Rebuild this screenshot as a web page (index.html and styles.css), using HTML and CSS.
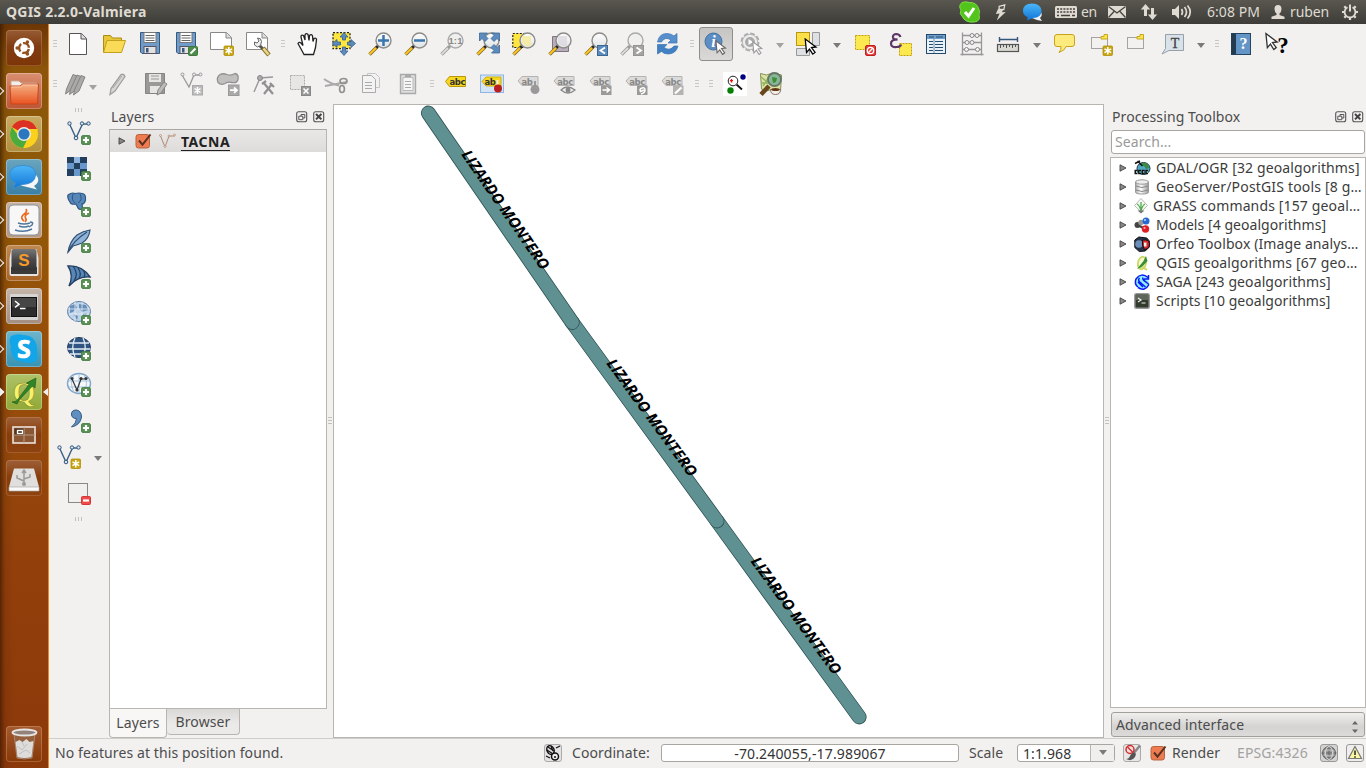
FILE: index.html
```html
<!DOCTYPE html>
<html lang="en">
<head>
<meta charset="utf-8">
<title>QGIS 2.2.0-Valmiera</title>
<link rel="stylesheet" href="styles.css">
</head>
<body>
<svg class="defs" width="0" height="0" aria-hidden="true">
  <defs>
    <linearGradient id="gLens" x1="0" y1="0" x2="0" y2="1"><stop offset="0" stop-color="#fdfdfd"/><stop offset="1" stop-color="#dfe3e6"/></linearGradient>
    <linearGradient id="gFolder" x1="0" y1="0" x2="0" y2="1"><stop offset="0" stop-color="#f4b184"/><stop offset="1" stop-color="#ea5220"/></linearGradient>
    <linearGradient id="gChat" x1="0" y1="0" x2="0" y2="1"><stop offset="0" stop-color="#4cb6f7"/><stop offset="1" stop-color="#0f74d8"/></linearGradient>
    <linearGradient id="gDark" x1="0" y1="0" x2="0" y2="1"><stop offset="0" stop-color="#777"/><stop offset=".5" stop-color="#4a4a4a"/><stop offset="1" stop-color="#333"/></linearGradient>
    <linearGradient id="gCyl" x1="0" y1="0" x2="1" y2="0"><stop offset="0" stop-color="#aaa"/><stop offset=".4" stop-color="#fff"/><stop offset="1" stop-color="#999"/></linearGradient>
  </defs>
  <symbol id="plus" viewBox="0 0 24 24"><rect x="14.500" y="14.500" width="9" height="9" rx="1.500" fill="#5b9157" stroke="#3f7a3c" stroke-width=".8"/><path d="M19 16v6M16 19h6" stroke="#fff" stroke-width="2.200"/></symbol>
  <symbol id="star" viewBox="0 0 24 24"><rect x="14" y="14" width="9.500" height="9.500" rx="1" fill="#c9a614" stroke="#b08e06" stroke-width=".8"/><path d="M18.800 15v7.600M15.500 16.900l6.600 3.800M22.100 16.900l-6.600 3.800" stroke="#fff" stroke-width="1.500"/></symbol>
  <symbol id="lens" viewBox="0 0 24 24"><path d="M9 15L1.500 22.500" stroke="#7a6a30" stroke-width="3.400"/><path d="M8 16L1.500 22.300" stroke="#fcc21c" stroke-width="2.200"/><path d="M11.500 12.500L8.500 15.500" stroke="#222" stroke-width="2.800"/><circle cx="15.500" cy="8.500" r="7.500" fill="url(#gLens)" stroke="#8b8b88" stroke-width="1.400"/></symbol>
  <symbol id="lensg" viewBox="0 0 24 24"><path d="M9 15L1.500 22.500" stroke="#999" stroke-width="3.400"/><path d="M8 16L1.500 22.300" stroke="#ddd" stroke-width="1.800"/><path d="M11.500 12.500L8.500 15.500" stroke="#999" stroke-width="2.800"/><circle cx="15.500" cy="8.500" r="7.500" fill="#efefee" stroke="#aaa" stroke-width="1.400"/></symbol>
  <symbol id="cursor" viewBox="0 0 16 20"><path d="M1 1l12 9-5 .6 4 5.400-2.600 2-3.600-5.700L2.500 16z" fill="#fff" stroke="currentColor" stroke-width="1.400"/></symbol>
  <symbol id="tagg" viewBox="0 0 24 24"><path d="M2 9L6 4.500h16v9H6z" fill="#dcdbda" stroke="#b4b3b2"/></symbol>
  <symbol id="float" viewBox="0 0 12 12"><rect x=".7" y=".7" width="10" height="10" rx="2" fill="none" stroke="#555" stroke-width="1.100"/><path d="M5 5V3.500h3.800V7H7M2.800 5.200h4v3.500h-4z" fill="none" stroke="#555"/></symbol>
  <symbol id="close" viewBox="0 0 12 12"><rect x=".7" y=".7" width="10" height="10" rx="2" fill="none" stroke="#555" stroke-width="1.100"/><path d="M3 3l5.400 5.400M8.400 3L3 8.400" stroke="#444" stroke-width="2"/></symbol>
  <symbol id="check" viewBox="0 0 18 18"><rect x="2" y="2.500" width="13.500" height="13.500" rx="2.500" fill="#ee7c50" stroke="#b5643f"/><path d="M5 8.500l3.500 4.200L16.500 2.500" fill="none" stroke="#5a3020" stroke-width="2"/></symbol>
  <symbol id="tri" viewBox="0 0 8 8"><path d="M1 .8L7 4 1 7.200z" fill="#888" stroke="#444" stroke-width=".9"/></symbol>
</svg>

<header class="panel">
  <div class="panel-title">QGIS 2.2.0-Valmiera</div>
  <div class="tray">
    <svg class="t-skype" viewBox="0 0 22 22"><path d="M3 1.500q4-1.500 7 0 8-.5 10 7 1 3 0 5 2 7-5 7.500-9 1-12-6-3-2-1-6Q-1 5 3 1.500z" fill="#53c41b" stroke="#7be046"/><path d="M6 11l3.500 4L15 7" fill="none" stroke="#fff" stroke-width="3"/></svg>
    <svg class="t-bolt" viewBox="0 0 14 18"><path d="M5 2.500l6-1.500-1 5-5-.5z" fill="none" stroke="#e4dfd6" stroke-width="1.300"/><path d="M4 5L1.500 10.500l4-.5L2.500 17.500 12 8.500l-4 .3L9.500 5.500z" fill="#dfdbd2"/></svg>
    <svg class="t-chat" viewBox="0 0 22 20"><path d="M17 8q5 4 1 8l2 3-5-1-5-2z" fill="#eef2f6"/><path d="M1 9Q1 1.500 10 1.500t9.500 7.500q0 6.500-8.500 7L5 18.500l.5-3.500Q1 13 1 9z" fill="url(#gChat)"/></svg>
    <svg class="t-kbd" viewBox="0 0 24 14"><rect x="1" y="1" width="22" height="12" rx="1.500" fill="#dfdbd2"/><path d="M3 4h18M3 7h18" stroke="#45433d" stroke-width="1.700" stroke-dasharray="2 1.200"/><path d="M3 10.500h2M7 10.500h9M18 10.500h3" stroke="#45433d" stroke-width="1.500"/></svg>
    <span class="t-en">en</span>
    <svg class="t-mail" viewBox="0 0 20 14"><rect x="1" y="1" width="18" height="12" fill="#dfdbd2"/><path d="M1.500 1.500L10 8l8.500-6.500M1.500 12.500L7.500 6M18.500 12.500L12.500 6" fill="none" stroke="#45433d" stroke-width="1.300"/></svg>
    <svg class="t-net" viewBox="0 0 18 18"><path d="M5.500 1L.8 6.500H4V13h3V6.500h3.200zM12.500 17l4.700-5.500H14V5h-3v6.500H7.800z" fill="#dfdbd2"/></svg>
    <svg class="t-vol" viewBox="0 0 22 16"><path d="M1 5h3l4-4v14l-4-4H1z" fill="#dfdbd2"/><path d="M10.500 5q2 3 0 6M13.500 3q4 5 0 10M16.500 1.500q5.500 6.500 0 13" fill="none" stroke="#dfdbd2" stroke-width="1.700"/></svg>
    <span class="t-clock">6:08 PM</span>
    <svg class="t-user" viewBox="0 0 14 16"><path d="M7 1q3.500 0 3.500 4Q10.500 8 8.500 9.500v1.500l5 1.800V15H.5v-2.200l5-1.800V9.500Q3.500 8 3.500 5 3.500 1 7 1z" fill="#dfdbd2"/></svg>
    <span class="t-name">ruben</span>
    <svg class="t-gear" viewBox="0 0 18 18"><path d="M11.500 4.300a5.400 5.400 0 1 1-5 0" fill="none" stroke="#dfdbd2" stroke-width="1.800"/><path d="M9 1.500v7" stroke="#dfdbd2" stroke-width="2"/><path d="M1 9h2.500M14.500 9H17M9 14.500V17M3.300 3.300l1.800 1.800M14.700 3.300l-1.800 1.800M3.300 14.700l1.800-1.800M14.700 14.700l-1.800-1.800" stroke="#dfdbd2" stroke-width="2.200"/></svg>
  </div>
</header>

<div class="desktop">
<nav class="launcher">
  <div class="tile t-home"><svg viewBox="0 0 36 36"><circle cx="18" cy="18" r="10.200" fill="#fff"/><circle cx="18" cy="18" r="4.900" fill="none" stroke="#94501c" stroke-width="2.400" stroke-dasharray="8.260 2" stroke-dashoffset="-1"/><circle cx="11.200" cy="18" r="1.800" fill="#94501c"/><circle cx="21.400" cy="12.100" r="1.800" fill="#94501c"/><circle cx="21.400" cy="23.900" r="1.800" fill="#94501c"/></svg></div>
  <div class="tile t-files run"><svg viewBox="0 0 36 36"><path d="M5 8h8l2 2h16v6H5z" fill="#f3eee9" stroke="#c8a894"/><path d="M4 13h10l2.500-2H32.500l-1 20H5z" fill="url(#gFolder)" stroke="#c9461a"/><path d="M5.500 14H15l2-2h14.500" fill="none" stroke="#f9c6a4"/></svg></div>
  <div class="tile t-chrome run"><svg viewBox="0 0 36 36"><circle cx="18" cy="18" r="14" fill="#fbd11b"/><path d="M18 18L5.900 11A14 14 0 0 1 31 13H18z" fill="#dc3025"/><path d="M5.900 11A14 14 0 0 0 17 32l6-12-11-1z" fill="#4bab3c"/><circle cx="18" cy="18" r="7" fill="#eee"/><circle cx="18" cy="18" r="5.600" fill="#2c78c0"/></svg></div>
  <div class="tile t-empathy run"><svg viewBox="0 0 36 36"><path d="M27 13q10 8 1 14l3 3.500-8-2-8-2z" fill="#f4f6f8"/><path d="M4 16Q4 6.500 17 6.500T29.500 16Q29 25 16 25.500L7 30l2.500-6Q4 21 4 16z" fill="url(#gChat)" stroke="#3c8fd0"/></svg></div>
  <div class="tile t-java run"><svg viewBox="0 0 36 36"><rect x="3" y="3" width="30" height="30" rx="4" fill="#f7f7f7" stroke="#8b97a0"/><path d="M20 7q2 3-3 6-3 3 1 6M23 11q-5 2-3.500 5 1.500 2-.5 4" fill="none" stroke="#ea6b22" stroke-width="1.700"/><path d="M12 21q6 2 12 0M13 24q5 2 10 0M9 28q9 3 17-1M24 20q4 0 2 3l-3 2" fill="none" stroke="#50779b" stroke-width="1.500"/></svg></div>
  <div class="tile t-sublime run"><svg viewBox="0 0 36 36"><path d="M3.500 13l2-9h25l2 9v16q0 2-2 2h-25q-2 0-2-2z" fill="#e4e3e2"/><path d="M5 22h26v7H5z" fill="#3a3a3a"/><rect x="5.500" y="4" width="25" height="21" rx="2" fill="url(#gDark)"/><text x="18" y="20.500" text-anchor="middle" class="sub-s">S</text></svg></div>
  <div class="tile t-term run"><svg viewBox="0 0 36 36"><rect x="4" y="6" width="28" height="26" rx="1" fill="#d5d4d2"/><rect x="5.500" y="9.500" width="25" height="19" fill="#2c2c2c" stroke="#111"/><path d="M6 10h24v9H6z" fill="#464646"/><path d="M9 13l4 3.200L9 19.500M14 20.500h5.500" fill="none" stroke="#fff" stroke-width="1.500"/></svg></div>
  <div class="tile t-skp run"><svg viewBox="0 0 36 36"><path d="M5 5q7-3 12-1 12 0 14 12 0 3 0 5 3 9-6 11-3 0-6-1Q7 32 5 20q-1-2 0-4-3-6 0-11z" fill="#12a5e8"/><text x="18" y="27" text-anchor="middle" class="skype-s">S</text></svg></div>
  <div class="tile t-qgis run focus"><svg viewBox="0 0 36 36"><text x="18" y="27.500" text-anchor="middle" class="qgis-q">Q</text><path d="M6 28q5 0 6-3L23 10.500 20.500 9 30 4l-1 10-2.500-2L14 25q-2 3-3 5z" fill="#2f8626" stroke="#1c5417" stroke-width=".6"/></svg></div>
  <div class="tile t-work"><svg viewBox="0 0 36 36"><rect x="7" y="10" width="22" height="16" fill="#8a5633" stroke="#ece3dc" stroke-width="1.600"/><path d="M18 10v16M7 18h22" stroke="#b69c88"/><rect x="8.500" y="11.500" width="9" height="6" fill="#503320"/><rect x="11.500" y="13.500" width="5" height="3" fill="none" stroke="#fff" stroke-width="1.300"/></svg></div>
  <div class="tile t-usb"><svg viewBox="0 0 36 36"><path d="M8 8.500h20l5 18.500H3z" fill="#e0dfdd"/><path d="M3 27h30v4H3z" fill="#fafafa" stroke="#aaa" stroke-width=".7"/><path d="M18 11v13M18 21l-7-3v-3M18 19l6-2v-3M16 13l2-3 2 3" fill="none" stroke="#9b9a98" stroke-width="1.500"/><circle cx="18" cy="24" r="2" fill="#9b9a98"/></svg></div>
  <div class="tile t-trash"><svg viewBox="0 0 36 36"><path d="M8 8h21l-3 24q-8 2-15 0z" fill="#94603d" stroke="#aa8670"/><path d="M9.500 16l4-2 3 2 4-3 3 3 4-1-2 16q-7 2-14 0z" fill="#dddcda"/><path d="M11 20l5 4 5-6M13 28l7-4 4 3M16 16l2 4" stroke="#c2c0bd" fill="none"/><ellipse cx="18.500" cy="6.500" rx="12" ry="3" fill="#92827a" stroke="#e6e5e3" stroke-width="1.800"/></svg></div>
</nav>

<main class="window">
  <div class="toolbar">
    <i class="grip g11"></i>
    <span class="c"><svg class="ic" viewBox="0 0 24 24"><path d="M3.500 1.500h12l5 5v16h-17z" fill="#fff" stroke="#555"/><path d="M15 1.500v5.500h5.500" fill="#ddd" stroke="#555"/></svg></span>
    <span class="c"><svg class="ic" viewBox="0 0 24 24"><path d="M1.500 20.500V3.500h7l2 2.500h9v3" fill="#e7c738" stroke="#ab8c12"/><path d="M1.500 20.500L5 8.500h18.500l-4 12z" fill="#fadb57" stroke="#c4a01d"/></svg></span>
    <span class="c"><svg class="ic" viewBox="0 0 24 24"><path d="M2.500.500h19v21H4l-1.500-1.500z" fill="#6f9ccb" stroke="#36597c"/><rect x="6" y=".5" width="12" height="10" fill="#fff" stroke="#777"/><path d="M7.500 3.500h9M7.500 6h9M7.500 8.500h9" stroke="#666"/><rect x="6" y="14.500" width="12" height="7" fill="#e2e2e2" stroke="#556"/><rect x="8" y="16" width="2.500" height="4.500" fill="#36597c"/></svg></span>
    <span class="c"><svg class="ic" viewBox="0 0 24 24"><path d="M2.500.500h19v21H4l-1.500-1.500z" fill="#6f9ccb" stroke="#36597c"/><rect x="6" y=".5" width="12" height="10" fill="#fff" stroke="#777"/><path d="M7.500 3.500h9M7.500 6h9M7.500 8.500h9" stroke="#666"/><rect x="6" y="14.500" width="10" height="7" fill="#e2e2e2" stroke="#556"/><rect x="8" y="16" width="2.500" height="4.500" fill="#36597c"/><rect x="14.500" y="14.500" width="9" height="9" rx="1" fill="#4d8b4a" stroke="#3f7a3c"/><path d="M16.500 21.500l5-5" stroke="#fff" stroke-width="2"/></svg></span>
    <span class="c"><svg class="ic" viewBox="0 0 24 24"><path d="M.5.500h16l5 5v12H.5z" fill="#fff" stroke="#888"/><path d="M16 .5v5.500h5.500" fill="#ddd" stroke="#888"/><use href="#star"/></svg></span>
    <span class="c"><svg class="ic" viewBox="0 0 24 24"><path d="M.5.500h16l5 5v12H.5z" fill="#fff" stroke="#888"/><path d="M16 .5v5.500h5.500" fill="#ddd" stroke="#888"/><path d="M13 13l4 4" stroke="#555" stroke-width="3"/><path d="M17 16l6 7" stroke="#8a7434" stroke-width="4.500"/><path d="M17.500 16.500l5 6" stroke="#edd887" stroke-width="2.500"/><path d="M8.500 10l2.500 1 2-2-1.500-3q4 0 4 3.500l-1 4-3 1.500-3-2z" fill="#eee" stroke="#666"/></svg></span>
    <i class="grip g14"></i>
    <span class="c"><svg class="ic" viewBox="0 0 24 24"><path d="M8 22.500L4.500 16 2 11.500q1-2 3-.5l2 2.500L5 5q0-2.500 2.500-1.500L9 8V3q1-2.500 3-.5l1 6 .5-5q2-2 3 .5l.5 5.500 1-3q2-1 2.500 1l-1 8-2 7z" fill="#fff" stroke="#222" stroke-width="1.300"/></svg></span>
    <span class="c"><svg class="ic" viewBox="0 0 24 24"><rect x="1" y=".7" width="17" height="16" fill="#ffe63f" stroke="#222" stroke-width="1.300" stroke-dasharray="2 1.500"/><path d="M12 .5l4 4.500h-2.500v3h-3V5H8zM23.500 11.500L19 15.500V13h-3.500v-3H19V7.500zM.5 11.500L5 7.500V10h3.500v3H5v2.500zM12 23.500L8 19h2.500v-4h3v4H16z" fill="#5c8cbd" stroke="#365f89" stroke-width=".8"/></svg></span>
    <span class="c"><svg class="ic" viewBox="0 0 24 24"><use href="#lens"/><path d="M15.500 3v11M10 8.500h11" stroke="#3a75ae" stroke-width="2.500"/></svg></span>
    <span class="c"><svg class="ic" viewBox="0 0 24 24"><use href="#lens"/><path d="M10 8.500h11" stroke="#3a75ae" stroke-width="2.500"/></svg></span>
    <span class="c"><svg class="ic" viewBox="0 0 24 24"><use href="#lensg"/><text x="15.500" y="12" text-anchor="middle" class="one">1:1</text></svg></span>
    <span class="c"><svg class="ic" viewBox="0 0 24 24"><use href="#lens"/><path d="M3.500 1h8L9 3.500l3 3L9 9.500l-3-3-2.500 2.500zM23.500 1h-8L18 3.500l-3 3 3 3 3-3L23.500 9zM23.500 21h-8l2.500-2.500-3-3 3-3 3 3 2.500-2.500z" fill="#5c8cbd" stroke="#3b6792" stroke-width=".8"/></svg></span>
    <span class="c"><svg class="ic" viewBox="0 0 24 24"><rect x=".8" y="1.500" width="14" height="14" fill="#ffe63f" stroke="#222" stroke-width="1.200" stroke-dasharray="2 1.500"/><use href="#lens"/><path d="M10 4h9v10q-7 1-9-4z" fill="#f6eb95" opacity=".8"/></svg></span>
    <span class="c"><svg class="ic" viewBox="0 0 24 24"><path d="M4.500 4.500h16v15h-16z" fill="#b9adbb" stroke="#80757f"/><use href="#lens"/><path d="M10 4h9v10q-7 1-9-4z" fill="#d7d0da" opacity=".6"/></svg></span>
    <span class="c"><svg class="ic" viewBox="0 0 24 24"><use href="#lens"/><rect x="13.500" y="13.500" width="10" height="10" fill="#5c8cbd" stroke="#3b6792"/><path d="M21 15.500L16.500 18.500l4.500 3" fill="none" stroke="#fff" stroke-width="1.800"/></svg></span>
    <span class="c"><svg class="ic" viewBox="0 0 24 24"><use href="#lensg"/><rect x="13.500" y="13.500" width="10" height="10" fill="#a5a4a3" stroke="#959493"/><path d="M16.500 15.500l4.500 3-4.500 3" fill="none" stroke="#fff" stroke-width="1.800"/></svg></span>
    <span class="c"><svg class="ic" viewBox="0 0 24 24"><path d="M1.500 10Q3 1.500 11 1.500q4 0 7 2.500L21 1.500V11h-9l3-3q-6-4-9.500 2z" fill="#5790cd" stroke="#3a72b3" stroke-width=".7"/><path d="M22 14q-2 8-10 8-4 0-6.500-2.500L1.500 22v-9.500h9.500l-3 3q6 4 10-1.500z" fill="#4280c4" stroke="#3a72b3" stroke-width=".7"/></svg></span>
    <i class="grip g12"></i>
    <span class="c pressed"><svg class="ic" viewBox="0 0 24 24"><circle cx="9.500" cy="9.500" r="8.500" fill="#5d8dc3" stroke="#41719f"/><text x="9.500" y="15" text-anchor="middle" class="info">i</text><use href="#cursor" x="11" y="8" width="13" height="16" color="#666"/></svg></span>
    <span class="c"><svg class="ic" viewBox="0 0 24 24"><circle cx="10" cy="10" r="8.200" fill="#ddd" stroke="#aaa" stroke-width="2.500" stroke-dasharray="4.400 2.040"/><circle cx="10" cy="10" r="7.600" fill="#eeeeed" stroke="#bbb"/><circle cx="10" cy="10" r="5" fill="#aaa"/><path d="M8.500 7l4.500 3-4.500 3z" fill="#fff"/><use href="#cursor" x="12" y="9" width="12" height="15" color="#999"/></svg></span>
    <i class="arr a20 dim"></i>
    <span class="c"><svg class="ic" viewBox="0 0 24 24"><path d="M16.500.5h7v13h-7zM.5 16.500h13v7H.5z" fill="#dde1e4" stroke="#999"/><rect x=".5" y=".5" width="13" height="13" fill="#fbe04a" stroke="#b69814"/><use href="#cursor" x="8" y="6" width="15" height="18" color="#000"/></svg></span>
    <i class="arr a21"></i>
    <span class="c"><svg class="ic" viewBox="0 0 24 24"><rect x="2.500" y="3.500" width="14" height="14" fill="#fce94f" stroke="#c3a000" stroke-dasharray="2 1"/><rect x="12.500" y="13.500" width="10" height="10" rx="1.500" fill="#e44040" stroke="#c11e1e"/><circle cx="17.500" cy="18.500" r="3.200" fill="none" stroke="#fff" stroke-width="1.300"/><path d="M15.300 20.700l4.400-4.400" stroke="#fff" stroke-width="1.300"/></svg></span>
    <span class="c"><svg class="ic" viewBox="0 0 24 24"><rect x="10.500" y="11.500" width="12" height="12" fill="#fce94f" stroke="#c3a000" stroke-dasharray="2 1"/><path d="M11.500 5Q10.500 2 7 2 3.500 2.500 4 5.500 4.500 8 8.500 7.500q-6.500 0-6.500 4t5.500 3.500q4 0 4.500-2.500" fill="none" stroke="#5c3566" stroke-width="2.200"/></svg></span>
    <span class="c"><svg class="ic" viewBox="0 0 24 24"><rect x="1.500" y="2.500" width="19" height="19" fill="#e8f1f8" stroke="#24496b"/><path d="M2 3h18v4H2z" fill="#6f9fcc"/><path d="M4 5h5M11 5h7M4 9.500h4M10 9.500h8M4 12.500h4M10 12.500h8M4 15.500h4M10 15.500h8M4 18.500h4M10 18.500h8" stroke="#284c6c" stroke-width="1.100"/><path d="M9 7v14" stroke="#4e7697" stroke-width=".8"/></svg></span>
    <span class="c"><svg class="ic" viewBox="0 0 24 24"><path d="M1.500.500v23M20.500.500v23M-.5 22.500h23M1 3.500h20M1 10.500h20M1 17.500h20" stroke="#989796" stroke-width="1.300"/><g fill="#f3f3f3" stroke="#888"><circle cx="11" cy="3.500" r="2"/><circle cx="16" cy="3.500" r="2"/><circle cx="6" cy="10.500" r="2"/><circle cx="11" cy="10.500" r="2"/><circle cx="5.500" cy="17.500" r="2"/><circle cx="16.500" cy="17.500" r="2"/></g></svg></span>
    <span class="c"><svg class="ic" viewBox="0 0 24 24"><path d="M2.500 5v5M20.500 5v5M2.500 7.500h18" stroke="#34587b" stroke-width="1.400"/><rect x=".5" y="12.500" width="21" height="7" fill="#d8d9d3" stroke="#555" stroke-width="1.200"/><path d="M3.500 13v3M6.500 13v2M9.500 13v3M12.500 13v2M15.500 13v3M18.500 13v2" stroke="#555"/></svg></span>
    <i class="arr a20"></i>
    <span class="c"><svg class="ic" viewBox="0 0 24 24"><path d="M4 2.500h15q2.500 0 2.500 2.500v7q0 2.500-2.500 2.500h-6q-1 4-7 6 2.500-3 2-6H4Q1.500 14.500 1.500 12V5q0-2.500 2.500-2.500z" fill="#fcea7c" stroke="#c8a41c"/></svg></span>
    <span class="c"><svg class="ic" viewBox="0 0 24 24"><path d="M2.500 5.500h16v11h-16z" fill="none" stroke="#555" stroke-dasharray="1 1"/><path d="M12 4.500h3V2.500h3.500v4.500H12z" fill="#fce94f" stroke="#c8a41c"/><use href="#star"/></svg></span>
    <span class="c"><svg class="ic" viewBox="0 0 24 24"><path d="M2.500 5.500h16v11h-16z" fill="none" stroke="#555" stroke-dasharray="1 1"/><path d="M12 4.500h3V2.500h3.500v4.500H12z" fill="#fce94f" stroke="#c8a41c"/></svg></span>
    <span class="c"><svg class="ic" viewBox="0 0 24 24"><path d="M4.500 2.500h18v16H8L1 22l3.500-5.500z" fill="#dae2e9" stroke="#96a0a8"/><text x="14" y="15.500" text-anchor="middle" class="tee">T</text></svg></span>
    <i class="arr a20"></i>
    <i class="grip g12"></i>
    <span class="c"><svg class="ic" viewBox="0 0 24 24"><rect x="2.500" y="1.500" width="19" height="21" fill="#6495c7" stroke="#26445f"/><path d="M2.500 1.500H7v21H2.500z" fill="#233c52"/><text x="14.500" y="17" text-anchor="middle" class="hq">?</text></svg></span>
    <span class="c"><svg class="ic" viewBox="0 0 24 24"><use href="#cursor" x="0" y="0" width="15" height="20" color="#333"/><text x="18" y="21" text-anchor="middle" class="wq">?</text></svg></span>
  </div>

  <div class="toolbar second">
    <i class="grip g11"></i>
    <span class="c c28"><svg class="ic" viewBox="0 0 24 24"><g fill="#aaa9a8" stroke="#858483"><path d="M1.500 22l1-5L9 2.500l4 1.500-6 14z"/><path d="M5.500 22.500l1-5L13 3l4 1.500-6 14z"/><path d="M9.500 23l1-5L17 3.500l4 1.500-6 14z"/></g></svg></span>
    <i class="arr a12 dim"></i>
    <span class="c c37"><svg class="ic" viewBox="0 0 24 24"><path d="M4 22.500l1-6 10-14q3-1 4 2L9 19z" fill="#d7d6d5" stroke="#a09f9e" stroke-width="1.300"/><path d="M7 16L16 4" stroke="#aaa"/></svg></span>
    <span class="c"><svg class="ic" viewBox="0 0 24 24"><path d="M1.500 1.500h19v20h-19z" fill="#9a9998" stroke="#858483"/><path d="M5 2h12v8H5zM6 14h10v7H6z" fill="#e6e5e4"/><path d="M7 4h8M7 7h8" stroke="#999"/><path d="M13 23l1-5 6-8 3 2-6 9z" fill="#bbb" stroke="#858483"/></svg></span>
    <span class="c"><svg class="ic" viewBox="0 0 24 24"><path d="M2 3l7 12 5-12h6" fill="none" stroke="#999" stroke-width="1.300"/><g fill="#eee" stroke="#999"><circle cx="2.500" cy="2.500" r="1.500"/><circle cx="14" cy="2.500" r="1.500"/><circle cx="20.500" cy="2.500" r="1.500"/></g><rect x="12.500" y="13.500" width="10" height="9.500" fill="#bbb" stroke="#aaa"/><path d="M17.500 15v7M14.500 16.500l6 4M20.500 16.500l-6 4" stroke="#fff" stroke-width="1.500"/></svg></span>
    <span class="c"><svg class="ic" viewBox="0 0 24 24"><path d="M4 2.500Q7 1 11 2.500t8-1q4 1 3 6-1 4-6 3-4-1-7 1-4 2-7-1-2-5 2-8z" fill="#c1c0bf" stroke="#929190" stroke-width="1.300"/><rect x="12.500" y="13" width="10.500" height="10.500" fill="#aaa" stroke="#999"/><path d="M14 18.200h7M18 15.500l3 2.700-3 2.700" fill="none" stroke="#fff" stroke-width="1.700"/></svg></span>
    <span class="c"><svg class="ic" viewBox="0 0 24 24"><path d="M2 20L8 6l13-1" fill="none" stroke="#999" stroke-width="1.400"/><circle cx="8" cy="6" r="2.500" fill="#aaa" stroke="#888"/><path d="M11 10l10 12M20 12L12 22M10 12l4-3M18 11l4 4" stroke="#919090" stroke-width="2.200"/></svg></span>
    <span class="c"><svg class="ic" viewBox="0 0 24 24"><path d="M2.500 3.500h14v14h-14z" fill="#e7e6e5" stroke="#aaa" stroke-dasharray="2 1"/><rect x="13.500" y="14.500" width="9" height="9" fill="#999" stroke="#888"/><path d="M15.500 16.500l5 5M20.500 16.500l-5 5" stroke="#fff" stroke-width="1.600"/></svg></span>
    <span class="c"><svg class="ic" viewBox="0 0 24 24"><path d="M0 7q7 5 15 6.500M1 14l22-4" stroke="#aaa" stroke-width="2" fill="none"/><ellipse cx="19.500" cy="9" rx="3.500" ry="2.500" fill="none" stroke="#929190" stroke-width="1.700"/><ellipse cx="18" cy="17" rx="2.400" ry="3.500" fill="none" stroke="#929190" stroke-width="1.700"/></svg></span>
    <span class="c"><svg class="ic" viewBox="0 0 24 24"><path d="M7.500 1.500h8l4 4v10h-12z" fill="#f1f1f1" stroke="#c6c5c4"/><path d="M2.500 3.500h9l4 4v13h-13z" fill="#f3f3f3" stroke="#aaa"/><path d="M5 10.500h7M5 13.500h7M5 16.500h7" stroke="#aaa"/></svg></span>
    <span class="c"><svg class="ic" viewBox="0 0 24 24"><path d="M4.500 2.500h15v19h-15z" fill="#ddd" stroke="#aaa" stroke-width="1.400"/><path d="M7 5.500h10v13H7z" fill="#f5f5f5" stroke="#bbb"/><path d="M9 2h6v3H9z" fill="#aaa"/><path d="M9 9.500h6M9 12.500h6M9 15.500h6" stroke="#aaa"/></svg></span>
    <i class="grip g12"></i>
    <span class="c"><svg class="ic" viewBox="0 0 24 24"><path d="M1.500 9.500L5.500 4.500h16v10h-16z" fill="#f7d81f" stroke="#b79907"/><text x="13.300" y="12.500" text-anchor="middle" class="abc">abc</text></svg></span>
    <span class="c"><svg class="ic" viewBox="0 0 24 24"><rect x=".5" y="3" width="23" height="17.500" fill="#d5e5f7" stroke="#8db6e4"/><path d="M2 9.500L6 5h15v9H6z" fill="#f7d81f" stroke="#cdb013"/><text x="10" y="12.500" text-anchor="middle" class="abc">ab</text><path d="M17.500 14V8" stroke="#eee" stroke-width="2"/><circle cx="18" cy="16.500" r="4" fill="#b91e20"/></svg></span>
    <span class="c"><svg class="ic" viewBox="0 0 24 24"><use href="#tagg"/><text x="11" y="12.500" text-anchor="middle" class="abc off">ab</text><path d="M19 14V9" stroke="#999" stroke-width="2"/><circle cx="19" cy="17.500" r="4.500" fill="#999"/></svg></span>
    <span class="c"><svg class="ic" viewBox="0 0 24 24"><use href="#tagg"/><text x="13" y="12.500" text-anchor="middle" class="abc off">abc</text><path d="M9 18q6-6 14 0-7 6-14 0z" fill="#f3f3f3" stroke="#888" stroke-width="1.300"/><circle cx="16" cy="18" r="2.500" fill="#888"/></svg></span>
    <span class="c"><svg class="ic" viewBox="0 0 24 24"><use href="#tagg"/><text x="13" y="12.500" text-anchor="middle" class="abc off">abc</text><rect x="13" y="13.500" width="10.500" height="9.500" fill="#9b9a99"/><path d="M14.500 18h7M18.500 15.500l3 2.500-3 2.500" fill="none" stroke="#fff" stroke-width="1.500"/></svg></span>
    <span class="c"><svg class="ic" viewBox="0 0 24 24"><use href="#tagg"/><text x="13" y="12.500" text-anchor="middle" class="abc off">abc</text><rect x="13" y="13.500" width="10.500" height="9.500" fill="#9b9a99"/><path d="M17 22q4-1 4-4t-3-2-1.500 3.500L20 18" fill="none" stroke="#fff" stroke-width="1.500"/></svg></span>
    <span class="c"><svg class="ic" viewBox="0 0 24 24"><use href="#tagg"/><text x="13" y="12.500" text-anchor="middle" class="abc off">abc</text><rect x="13" y="13.500" width="10.500" height="9.500" fill="#b4b3b2"/><path d="M15 21.500l6.500-6" stroke="#fff" stroke-width="2.200"/></svg></span>
    <i class="grip g14"></i>
    <i class="grip g13"></i>
    <span class="c"><svg class="ic" viewBox="0 0 24 24"><rect width="24" height="24" fill="#fff"/><path d="M13.500 12.500l5.500 5" stroke="#111" stroke-width="1.800"/><circle cx="10" cy="9" r="4.800" fill="#fff" stroke="#222"/><path d="M8.500 7v3.500M7 8.700h3" stroke="#e11" stroke-width="1.300"/><circle cx="20" cy="5" r="2.700" fill="#010180"/><circle cx="7.500" cy="18.500" r="3.200" fill="#058005"/></svg></span>
    <span class="c"><svg class="ic" viewBox="0 0 24 24"><path d="M1.500 1.500l6 1.500 6-2 9 2-1 16-8-2-6 2-5-2z" fill="#dde3a3" stroke="#849057"/><path d="M2 5l9 7M12 2L4 14M2 11h8" stroke="#90b561" stroke-width="1.400"/><path d="M10 14L2 22.500" stroke="#67471b" stroke-width="4.500"/><circle cx="15.500" cy="7.500" r="6.500" fill="#86b797" stroke="#667565" stroke-width="1.800"/><path d="M13 5l5 1-1 4-3 1z" fill="#438a39"/><path d="M11.500 17.500h10q0 5-5 5t-5-5z" fill="#f3eee9" stroke="#847463"/><ellipse cx="16.500" cy="17.500" rx="4" ry="1.500" fill="#643413"/></svg></span>
  </div>

  <div class="work">
    <aside class="vbar">
      <i class="hgrip top"></i>
      <span class="v"><svg class="ic" viewBox="0 0 24 24"><path d="M2.500 3l6.500 14 6.500-14h6" fill="none" stroke="#3d6185" stroke-width="1.400"/><g fill="#d9e6f1" stroke="#31557a"><circle cx="2.500" cy="2.500" r="1.700"/><circle cx="9" cy="17" r="1.800"/><circle cx="15" cy="2.500" r="1.700"/><circle cx="21.500" cy="2.500" r="1.700"/></g><use href="#plus"/></svg></span>
      <span class="v"><svg class="ic" viewBox="0 0 24 24"><rect x="0" y="0" width="20" height="19" fill="#6797cb"/><path d="M0 0h7v6H0zM13 0h7v6h-7zM7 6h6v6H7zM0 12h7v7H0zM13 12h7v7h-7z" fill="#233f5e"/><path d="M7 0h6v6H7z" fill="#90b5de"/><use href="#plus"/></svg></span>
      <span class="v"><svg class="ic" viewBox="0 0 24 24"><path d="M1 2q4-3 7-1.500 4-1 7.500 0Q19 1 18.500 7q-1 4-3.500 4l.5 4q-2 3-4.500 0L9 11q-5 1-6-2Q0 5 1 2z" fill="#5787b9" stroke="#2e5682" stroke-width="1.200"/><path d="M6 1q-2 6 2 9M13 1q3 6-2 9" fill="none" stroke="#2e5682"/><use href="#plus"/></svg></span>
      <span class="v"><svg class="ic" viewBox="0 0 24 24"><path d="M1 23Q3 12 10 6q6-4 13-5-1 9-8 13-5 2-9 3z" fill="#90b3d9" stroke="#2e5073" stroke-width="1.200"/><path d="M1 23Q6 12 20 3" fill="none" stroke="#2e5073" stroke-width="1.300"/><use href="#plus"/></svg></span>
      <span class="v"><svg class="ic" viewBox="0 0 24 24"><path d="M1 1q14-1 22 11-12-1-21 9Q7 10 1 1z" fill="#5787b9" stroke="#233f5e" stroke-width="1.400"/><path d="M6 1q6 8 1 15M11 3q4 6 1 10M16 5q3 4 1 7" fill="none" stroke="#233f5e" stroke-width="1.200"/><use href="#plus"/></svg></span>
      <span class="v"><svg class="ic" viewBox="0 0 24 24"><ellipse cx="12" cy="10.500" rx="11.500" ry="10" fill="#bfd3e8" stroke="#597fa7"/><path d="M3 5l5-2 2 4-4 4-3 1zM12 3l7 1 2 5-6 2-3-4zM6 13l5 2-1 4zM15 13l5-1-2 4z" fill="#688fb9"/><path d="M1 8h22M2 13h20M8 1v19M15 1v19" stroke="#e7eff7" stroke-width=".8"/><use href="#plus"/></svg></span>
      <span class="v"><svg class="ic" viewBox="0 0 24 24"><ellipse cx="12" cy="10.500" rx="11.500" ry="10" fill="#2f5580" stroke="#1f3c5c"/><path d="M2 6h20M.500 12h23M3 17h18M8 1Q3.500 10 8 20M16 1q4.500 9 0 19" fill="none" stroke="#e3edf6" stroke-width="1.300"/><use href="#plus"/></svg></span>
      <span class="v"><svg class="ic" viewBox="0 0 24 24"><ellipse cx="12" cy="10.500" rx="11.500" ry="10" fill="#f5f8fb" stroke="#82a6cb" stroke-width="1.400"/><path d="M2 8h20M2 14h20M7 2Q2 10 7 19M17 2q5 8 0 17M12 1v19" fill="none" stroke="#a9c4df"/><path d="M5 6l5 11 4-11h5" fill="none" stroke="#333" stroke-width="1.200"/><g fill="#333"><circle cx="5" cy="5.500" r="1.600"/><circle cx="10" cy="17" r="1.600"/><circle cx="14" cy="5.500" r="1.600"/><circle cx="19" cy="5.500" r="1.600"/></g><use href="#plus"/></svg></span>
      <span class="v"><svg class="ic" viewBox="0 0 24 24"><path d="M4.500 5q0-4 5-4 5 1 5 7-1 8-10 10 5-4 5-8.500-5 0-5-4.500z" fill="#6090c2" stroke="#32597f"/><use href="#plus"/></svg></span>
      <div class="v split"><svg class="ic" viewBox="0 0 24 24"><path d="M2.500 3l6.500 14 6.500-14h6" fill="none" stroke="#3d6185" stroke-width="1.400"/><g fill="#d9e6f1" stroke="#31557a"><circle cx="2.500" cy="2.500" r="1.700"/><circle cx="9" cy="17" r="1.800"/><circle cx="15" cy="2.500" r="1.700"/><circle cx="21.500" cy="2.500" r="1.700"/></g><use href="#star"/></svg><i class="arr"></i></div>
      <span class="v"><svg class="ic" viewBox="0 0 24 24"><rect x="1.500" y="2.500" width="19" height="19" fill="#f0f0ef" stroke="#888"/><rect x="14.500" y="15.500" width="9" height="8" rx="1" fill="#ef4a4a" stroke="#d63636"/><path d="M16 19.500h6" stroke="#fff" stroke-width="2.200"/></svg></span>
      <i class="hgrip bottom"></i>
    </aside>

    <section class="dock layers">
      <div class="dock-title"><span class="s-layers">Layers</span><span class="btns"><svg viewBox="0 0 12 12"><use href="#float"/></svg><svg viewBox="0 0 12 12"><use href="#close"/></svg></span></div>
      <div class="tree">
        <div class="layer-row"><svg class="tri" viewBox="0 0 8 8"><use href="#tri"/></svg><svg class="chk" viewBox="0 0 18 18"><use href="#check"/></svg><svg class="lic" viewBox="0 0 18 16"><path d="M1.500 3l4.500 11L10 3h5.500" fill="none" stroke="#b08872"/><g fill="#f3e6df" stroke="#b08872" stroke-width=".7"><circle cx="1.500" cy="2.500" r="1"/><circle cx="6" cy="13.500" r="1"/><circle cx="10" cy="3" r="1"/><circle cx="15.500" cy="2" r="1"/></g></svg><b class="lname">TACNA</b></div>
      </div>
      <div class="tabs"><span class="tab on">Layers</span><span class="tab">Browser</span></div>
    </section>
    <i class="handle left"></i>

    <section class="map">
      <svg viewBox="334 105 769 633" width="769" height="633">
        <g fill="none" stroke-linecap="round">
          <path d="M717 521L859.200 717" stroke="#2f5253" stroke-width="14.800"/><path d="M717 521L859.200 717" stroke="#5f9193" stroke-width="13.200"/>
          <path d="M572.300 322.500L717 521" stroke="#2f5253" stroke-width="14.800"/><path d="M572.300 322.500L717 521" stroke="#5f9193" stroke-width="13.200"/>
          <path d="M428.300 113L572.300 322.500" stroke="#2f5253" stroke-width="14.800"/><path d="M428.300 113L572.300 322.500" stroke="#5f9193" stroke-width="13.200"/>
        </g>
        <text class="road" textLength="141.500" lengthAdjust="spacingAndGlyphs" transform="translate(461 154.500) rotate(55.300)">LIZARDO MONTERO</text>
        <text class="road" textLength="141.500" lengthAdjust="spacingAndGlyphs" transform="translate(606 363.500) rotate(53.800)">LIZARDO MONTERO</text>
        <text class="road" textLength="141.500" lengthAdjust="spacingAndGlyphs" transform="translate(750.300 561.500) rotate(53.900)">LIZARDO MONTERO</text>
      </svg>
    </section>
    <i class="handle right"></i>

    <section class="dock processing">
      <div class="dock-title"><span class="s-proc">Processing Toolbox</span><span class="btns"><svg viewBox="0 0 12 12"><use href="#float"/></svg><svg viewBox="0 0 12 12"><use href="#close"/></svg></span></div>
      <div class="search">Search...</div>
      <div class="algos">
        <div class="algo"><svg class="tri" viewBox="0 0 8 8"><use href="#tri"/></svg><svg class="aic" viewBox="0 0 16 16"><ellipse cx="9.500" cy="8.500" rx="6.500" ry="6" fill="#52a9c4" stroke="#234"/><path d="M5 5l5 1 2 3 3-1-1-4-4-1.500z" fill="#3b8b47"/><path d="M1 3.500l5-2.500M3.500 1l5 5" stroke="#111" stroke-width="1.400"/><path d="M.5 12h13.500" stroke="#111" stroke-width="4.500" stroke-dasharray="3 .6"/><path d="M2 12h12" stroke="#8cc" stroke-dasharray="1 2.600" stroke-width="2"/></svg><span class="a1">GDAL/OGR [32 geoalgorithms]</span></div>
        <div class="algo"><svg class="tri" viewBox="0 0 8 8"><use href="#tri"/></svg><svg class="aic" viewBox="0 0 16 16"><path d="M1.500 3v10q0 2 6.500 2t6.500-2V3z" fill="url(#gCyl)" stroke="#999"/><ellipse cx="8" cy="3" rx="6.500" ry="2.200" fill="#eee" stroke="#999"/><path d="M2 7q6 3 12 0M2 11q6 3 12 0" fill="none" stroke="#888"/></svg><span class="a2">GeoServer/PostGIS tools [8 g…</span></div>
        <div class="algo"><svg class="tri" viewBox="0 0 8 8"><use href="#tri"/></svg><svg class="aic narrow" viewBox="0 0 16 16"><path d="M7 .5L13.500 7.500 7 14 .5 7.500z" fill="#f4f7f4" stroke="#aaa" stroke-width=".8"/><path d="M7 13V4M7 13Q5.500 7 3 6M7 13Q8.500 7 11 6" fill="none" stroke="#50ad4a" stroke-width="1.300"/><path d="M3.500 12.500h7L7 15.500z" fill="#777"/></svg><span class="a3">GRASS commands [157 geoal…</span></div>
        <div class="algo"><svg class="tri" viewBox="0 0 8 8"><use href="#tri"/></svg><svg class="aic" viewBox="0 0 16 16"><path d="M4 8l7-4M4 8l7 4" stroke="#444" stroke-width="2.500"/><circle cx="3.500" cy="8" r="3" fill="#444"/><circle cx="7" cy="5.500" r="2.700" fill="#999"/><circle cx="12" cy="4" r="3.500" fill="#2769d2"/><circle cx="11.500" cy="12" r="3.700" fill="#df1f25"/><circle cx="10.500" cy="11" r="1" fill="#fbb"/><circle cx="11" cy="3" r="1" fill="#bdf"/></svg><span class="a4">Models [4 geoalgorithms]</span></div>
        <div class="algo"><svg class="tri" viewBox="0 0 8 8"><use href="#tri"/></svg><svg class="aic" viewBox="0 0 16 16"><path d="M.8 4l4-3 8 1 2.500 3v6l-4 4-6 .5-4.500-4z" fill="#25344c" stroke="#111"/><circle cx="5" cy="8" r="3.800" fill="#6d90ba"/><path d="M8.500 4q7-1 7 4t-5 5.500q-3-4-2-9.500z" fill="#d62828" stroke="#111"/><path d="M10 6.500h2.500v4H10z" fill="#eee"/></svg><span class="a5">Orfeo Toolbox (Image analys…</span></div>
        <div class="algo"><svg class="tri" viewBox="0 0 8 8"><use href="#tri"/></svg><svg class="aic" viewBox="0 0 16 16"><ellipse cx="8" cy="8" rx="4" ry="6.300" transform="rotate(12 8 8)" fill="#f7f9d6" stroke="#cdd862" stroke-width="1.800"/><path d="M3 14L9.500 6 12 1l1.500 5L8 12z" fill="#3a8f32"/><path d="M8 11.500l5 3.500" stroke="#cdd862" stroke-width="1.800"/></svg><span class="a6">QGIS geoalgorithms [67 geo…</span></div>
        <div class="algo"><svg class="tri" viewBox="0 0 8 8"><use href="#tri"/></svg><svg class="aic" viewBox="0 0 16 16"><circle cx="8" cy="8" r="7" fill="#8feeff"/><path d="M14 3.500Q7-2 2 5q-2 5 2 8M5.500 4q-2.500 3 2 5.500l4 3.500M9 3.500q-1 2 3 4.500l3 2.500M4 13.500q7 4.500 11-3M14.500 1v4H10M4 8l5 5" fill="none" stroke="#0918f5" stroke-width="1.500"/></svg><span class="a7">SAGA [243 geoalgorithms]</span></div>
        <div class="algo"><svg class="tri" viewBox="0 0 8 8"><use href="#tri"/></svg><svg class="aic" viewBox="0 0 16 16"><rect x=".8" y=".8" width="14.400" height="14.400" rx="1.500" fill="#333b2f" stroke="#999" stroke-width="1.500"/><path d="M2 2h12v5H2z" fill="#5d6658"/><path d="M4 5l3 2-3 2M7.500 10h4" fill="none" stroke="#eee" stroke-width="1.200"/></svg><span class="a8">Scripts [10 geoalgorithms]</span></div>
      </div>
      <div class="combo"><span class="s-adv">Advanced interface</span><svg viewBox="0 0 8 14"><path d="M1 4.500l3-3.500 3 3.500zM1 9.500L4 13l3-3.500z" fill="#666"/></svg></div>
    </section>
  </div>

  <footer class="status">
    <span class="msg">No features at this position found.</span>
    <span class="sbtn b-mouse"><svg viewBox="0 0 18 18"><rect x=".5" y=".5" width="17" height="17" rx="2.500" fill="#e4e3e2" stroke="#aaa"/><ellipse cx="6.500" cy="6" rx="3.500" ry="4.500" transform="rotate(-25 6.500 6)" fill="#ddd" stroke="#111" stroke-width="1.500"/><path d="M4 3l6 4M3 6l6 4M7 2l2 5M12 4l4-2M2 12l4 2" stroke="#111" stroke-width="1.200"/><circle cx="11" cy="12.500" r="3.500" fill="#eee" stroke="#111" stroke-width="1.500"/><circle cx="11" cy="13" r="1" fill="#111"/></svg></span>
    <span class="l-coord">Coordinate:</span>
    <span class="field">-70.240055,-17.989067</span>
    <span class="l-scale">Scale</span>
    <span class="scale"><span class="sv">1:1.968</span><span class="sa"><i class="arr"></i></span></span>
    <span class="sbtn b-stop"><svg viewBox="0 0 18 18"><rect x=".5" y=".5" width="17" height="17" rx="2.500" fill="#e8e7e6" stroke="#aaa"/><path d="M17 1.500L10 10" stroke="#888" stroke-width="2.500"/><path d="M11 8q-3 1-4 4t-4 3q6 3 9-2l1-3z" fill="#555"/><circle cx="7" cy="5.500" r="4" fill="#f6dfdf" stroke="#cd3030" stroke-width="1.500"/><path d="M4.500 3l5 5" stroke="#cd3030" stroke-width="1.400"/></svg></span>
    <svg class="chk b-render" viewBox="0 0 18 18"><use href="#check"/></svg>
    <span class="l-render">Render</span>
    <span class="l-epsg">EPSG:4326</span>
    <span class="sbtn b-crs"><svg viewBox="0 0 18 18"><rect x=".5" y=".5" width="17" height="17" rx="2.500" fill="#d4d3d2" stroke="#999"/><circle cx="9" cy="9" r="6.500" fill="#999" stroke="#666"/><path d="M1.500 9h15M9 1.500v15M4 5h10M4 13h10" stroke="#666"/><ellipse cx="9" cy="9" rx="3.500" ry="6.500" fill="none" stroke="#ddd"/><path d="M5 6h8v6H5z" fill="none" stroke="#ccc"/></svg></span>
    <span class="sbtn b-warn"><svg viewBox="0 0 18 18"><rect x=".5" y=".5" width="17" height="17" rx="2.500" fill="#efeeed" stroke="#999"/><path d="M9 2.500l6.500 12h-13z" fill="#fbf6a4" stroke="#777" stroke-width="1.200"/><path d="M9 6.500v4.500M9 12.200v1.500" stroke="#222" stroke-width="1.500"/></svg></span>
  </footer>
</main>
</div>
</body>
</html>
```
FILE: styles.css
```css
* { box-sizing: border-box; }
html, body { margin: 0; height: 100%; }
body {
  width: 1366px; height: 768px; overflow: hidden;
  display: flex; flex-direction: column;
  background: #f2f1f0; color: #4c4c4c;
  font: 14px/18px "Noto Sans", "Open Sans", sans-serif;
  letter-spacing: .1px;
  white-space: nowrap;
}
svg { display: block; overflow: visible; flex: none; }
i { font-style: normal; flex: none; }
.defs { position: absolute; }

/* Top panel */
.panel {
  flex: 0 0 24px; display: flex; align-items: center; justify-content: space-between;
  padding: 0 7px 0 6px; color: #dfdbd2;
  background: linear-gradient(#59574f, #3d3c38);
}
.panel-title { font-weight: 700; font-size: 14px; letter-spacing: .23px; }
.tray { display: flex; align-items: center; }
.t-skype { width: 22px; height: 22px; margin-right: 13px; }
.t-bolt { width: 14px; height: 17px; margin-right: 14px; }
.t-chat { width: 22px; height: 20px; margin-right: 10px; }
.t-kbd { width: 24px; height: 14px; }
.t-en { width: 29px; padding-left: 3px; letter-spacing: -.3px; }
.t-mail { width: 20px; height: 14px; margin-right: 13px; }
.t-net { width: 18px; height: 18px; margin-right: 13px; }
.t-vol { width: 22px; height: 16px; margin-right: 14px; }
.t-clock { width: 64px; letter-spacing: .05px; }
.t-user { width: 14px; height: 16px; margin-right: 5px; }
.t-name { width: 51px; letter-spacing: -.1px; }
.t-gear { width: 18px; height: 18px; }

.desktop { flex: 1; display: flex; min-height: 0; }

/* Launcher */
.launcher {
  flex: 0 0 49px; display: flex; flex-direction: column; gap: 7px; padding: 6px 0 6px 6px;
  border-right: 1px solid #e88a22;
  background:
    linear-gradient(90deg, rgba(40,15,0,.55), rgba(60,25,0,.12) 5px, transparent 14px),
    linear-gradient(180deg, #6d3606, #8c5509 45px, #8f5b08 170px, #975008 290px, #964b0b 400px, #933f0b 540px, #8c390a);
}
.tile { position: relative; width: 36px; height: 36px; border-radius: 4px; box-shadow: inset 0 0 0 1px rgba(255,255,255,.28); }
.tile svg { width: 36px; height: 36px; }
.t-home { background: linear-gradient(#965b34, #813d12 45%, #7c3507); box-shadow: inset 0 0 0 1px rgba(255,200,150,.22); }
.t-files { background: linear-gradient(#d98e70, #bd5634); }
.t-chrome { background: linear-gradient(#c9aa62, #b18f3c); }
.t-empathy { background: linear-gradient(#6aa5be, #397fa6); }
.t-java { background: linear-gradient(#c8b1a0, #b7977f); }
.t-sublime { background: linear-gradient(#c08850, #a76325); }
.t-term { background: linear-gradient(#c5b5a9, #a38e80); }
.t-skp { background: linear-gradient(#70b5ca, #3992b2); }
.t-qgis { background: linear-gradient(#afc269, #90a937); }
.t-work, .t-usb { background: linear-gradient(#9e6038, #863c0c 50%, #8e4310); box-shadow: inset 0 0 0 1px rgba(255,200,150,.2); }
.t-trash { margin-top: auto; background: linear-gradient(#a45a30, #863808); box-shadow: inset 0 0 0 1px rgba(255,200,150,.28); }
.run::before {
  content: ""; position: absolute; left: -9px; top: 15px; width: 5px; height: 5px;
  border: solid #eee; border-width: 1px 1px 0 0; transform: rotate(45deg);
}
.focus::before { background: #eee; }
.focus::after { content: ""; position: absolute; left: 37px; top: 14px; border: 4px solid transparent; border-right: 5px solid #eee; border-left: 0; }
.sub-s { font: 700 17px "Liberation Sans", sans-serif; fill: #f89a2b; }
.skype-s { font: 700 25px "Open Sans", sans-serif; fill: #fff; stroke: #fff; stroke-width: .6px; }
.qgis-q { font: 700 29px "Liberation Serif", serif; fill: #f4f36b; stroke: #84852a; stroke-width: .6px; }

/* Window */
.window { flex: 1; display: flex; flex-direction: column; min-width: 0; }
.toolbar { flex: 0 0 40px; display: flex; align-items: center; }
.c { flex: 0 0 36px; height: 36px; display: flex; align-items: center; justify-content: center; }
.c28 { flex-basis: 28px; padding-left: 4px; }
.c37 { flex-basis: 40px; }
.ic { width: 24px; height: 24px; }
.pressed { border: 1px solid #8e8d8b; border-radius: 3px; background: linear-gradient(#c6c5c4, #dad9d8); height: 34px; flex-basis: 34px; margin: 0 1px; }
.grip { height: 8px; background: repeating-linear-gradient(#c9c8c6 0 1px, transparent 1px 3px) center / 4px 8px no-repeat; }
.g11 { width: 11px; } .g12 { width: 12px; } .g13 { width: 13px; } .g14 { width: 14px; }
.arr { display: flex; justify-content: center; align-items: center; padding-top: 2px; }
.arr::before { content: ""; border: 4.5px solid transparent; border-top: 5px solid #7b7a78; border-bottom: 0; }
.dim::before { border-top-color: #a3a2a1; }
.a12 { width: 10px; padding-top: 6px; } .a20 { width: 20px; } .a21 { width: 21px; }
.one { font: 700 9.5px "Liberation Sans", sans-serif; fill: #888; }
.info { font: italic 700 16px "Liberation Serif", serif; fill: #fff; }
.tee { font: 14px "Liberation Serif", serif; fill: #444; stroke: #444; stroke-width: .3px; }
.hq { font: 700 16px "Liberation Serif", serif; fill: #fff; }
.wq { font: 700 23px "Liberation Serif", serif; fill: #000; }
.abc { font: 700 8.5px "DejaVu Sans", sans-serif; fill: #333; letter-spacing: -.5px; }
.off { fill: #888; }

.work { flex: 1; display: flex; min-height: 0; }
.vbar { flex: 0 0 60px; display: flex; flex-direction: column; align-items: center; }
.v { flex: 0 0 36px; display: flex; align-items: center; }
.split { gap: 12px; padding-left: 1px; }
.split .arr { width: 9px; }
.hgrip { width: 8px; height: 4px; background: repeating-linear-gradient(90deg, #c2c1bf 0 1px, transparent 1px 3px); }
.hgrip.top { margin: 4px 0 3px; }
.hgrip.bottom { margin-top: 6px; }

.dock { display: flex; flex-direction: column; }
.layers { flex: 0 0 218px; }
.dock-title { flex: 0 0 25px; display: flex; align-items: center; justify-content: space-between; padding-left: 2px; }
.btns { display: flex; gap: 5px; padding-right: 2px; }
.btns svg { width: 12px; height: 12px; }
.tree { flex: 0 0 580px; background: #fff; border: 1px solid #b9b6b2; border-top-color: #aaa7a3; }
.layer-row { height: 22px; display: flex; align-items: center; padding-left: 8px; color: #222; background: linear-gradient(#e9e8e7, #dddcda); }
.tri { width: 8px; height: 8px; }
.chk { width: 18px; height: 18px; }
.layer-row .chk { margin-left: 8px; }
.lic { width: 18px; height: 16px; margin-left: 7px; }
.lname { margin-left: 4px; line-height: 17px; border-bottom: 1px solid #222; margin-top: 2px; letter-spacing: .5px; }
.tabs { display: flex; align-items: flex-start; }
.tab { height: 26px; width: 73px; text-align: center; line-height: 25px; border: 1px solid #b9b6b2; border-top: 0; border-left: 0; border-radius: 0 0 4px 4px; background: linear-gradient(#d9d8d6, #eceae9 60%); }
.tab.on { height: 29px; width: 58px; line-height: 28px; border-left: 1px solid #b9b6b2; background: #f8f7f6; }
.handle { width: 6px; background: repeating-linear-gradient(#c2c1bf 0 1px, transparent 1px 3px) center / 4px 8px no-repeat; }
.map { flex: 0 0 771px; height: 634px; background: #fff; border: 1px solid #b9b6b2; }
.map svg { overflow: hidden; }
.road { font: italic 700 15px "Open Sans", "Noto Sans", sans-serif; fill: #000; letter-spacing: 0; }

.processing { flex: 0 0 256px; }
.search { flex: 0 0 24px; margin: 1px 1px 3px; padding: 1px 3px; line-height: 19px; color: #9a9998; background: #fff; border: 1px solid #a9a5a0; border-radius: 3px; }
.algos { flex: 0 0 551px; background: #fff; border: 1px solid #b9b6b2; color: #3c3c3c; }
.algo { height: 19px; display: flex; align-items: center; padding-left: 8px; }
.a1 { letter-spacing: .12px; }
.a2 { letter-spacing: .17px; }
.a3 { letter-spacing: .14px; }
.a4, .a8 { letter-spacing: .05px; }
.a6 { letter-spacing: .14px; }
.aic { width: 16px; height: 16px; margin: 0 6px 0 7px; }
.narrow { margin-right: 3px; }
.combo { flex: 0 0 25px; margin: 4px 1px 0; padding: 0 5px 0 4px; display: flex; align-items: center; justify-content: space-between; border: 1px solid #a3a09c; border-radius: 3px; background: linear-gradient(#f0efee, #d4d3d2 60%, #dcdbda); }
.combo svg { width: 8px; height: 14px; margin-top: 4px; }

/* Status bar */
.status { flex: 0 0 30px; display: flex; align-items: center; border-top: 1px solid #d0cecb; padding: 0 0 2px 6px; }
.status > * { flex: none; }
.msg { width: 489px; }
.sbtn svg { width: 18px; height: 18px; }
.l-coord { width: 99px; padding-left: 10px; }
.field { width: 298px; height: 18px; background: #fff; border: 1px solid #a9a5a0; border-radius: 3px; text-align: center; line-height: 18px; color: #333; letter-spacing: .15px; }
.l-scale { width: 58px; padding-left: 10px; }
.scale { width: 98px; height: 18px; display: flex; border: 1px solid #a9a5a0; border-radius: 3px; background: #fff; color: #333; }
.sv { width: 72px; padding-left: 5px; line-height: 17px; }
.sa { flex: 1; display: flex; align-items: center; justify-content: center; border-left: 1px solid #b9b6b2; background: #f0efee; }
.sa .arr { padding: 0; }
.b-stop { margin-left: 8px; }
.b-render { margin-left: 8px; }
.l-render { width: 70px; padding-left: 5px; }
.l-epsg { width: 83px; color: #a3a2a1; }
.b-warn { margin-left: 8px; }
```
